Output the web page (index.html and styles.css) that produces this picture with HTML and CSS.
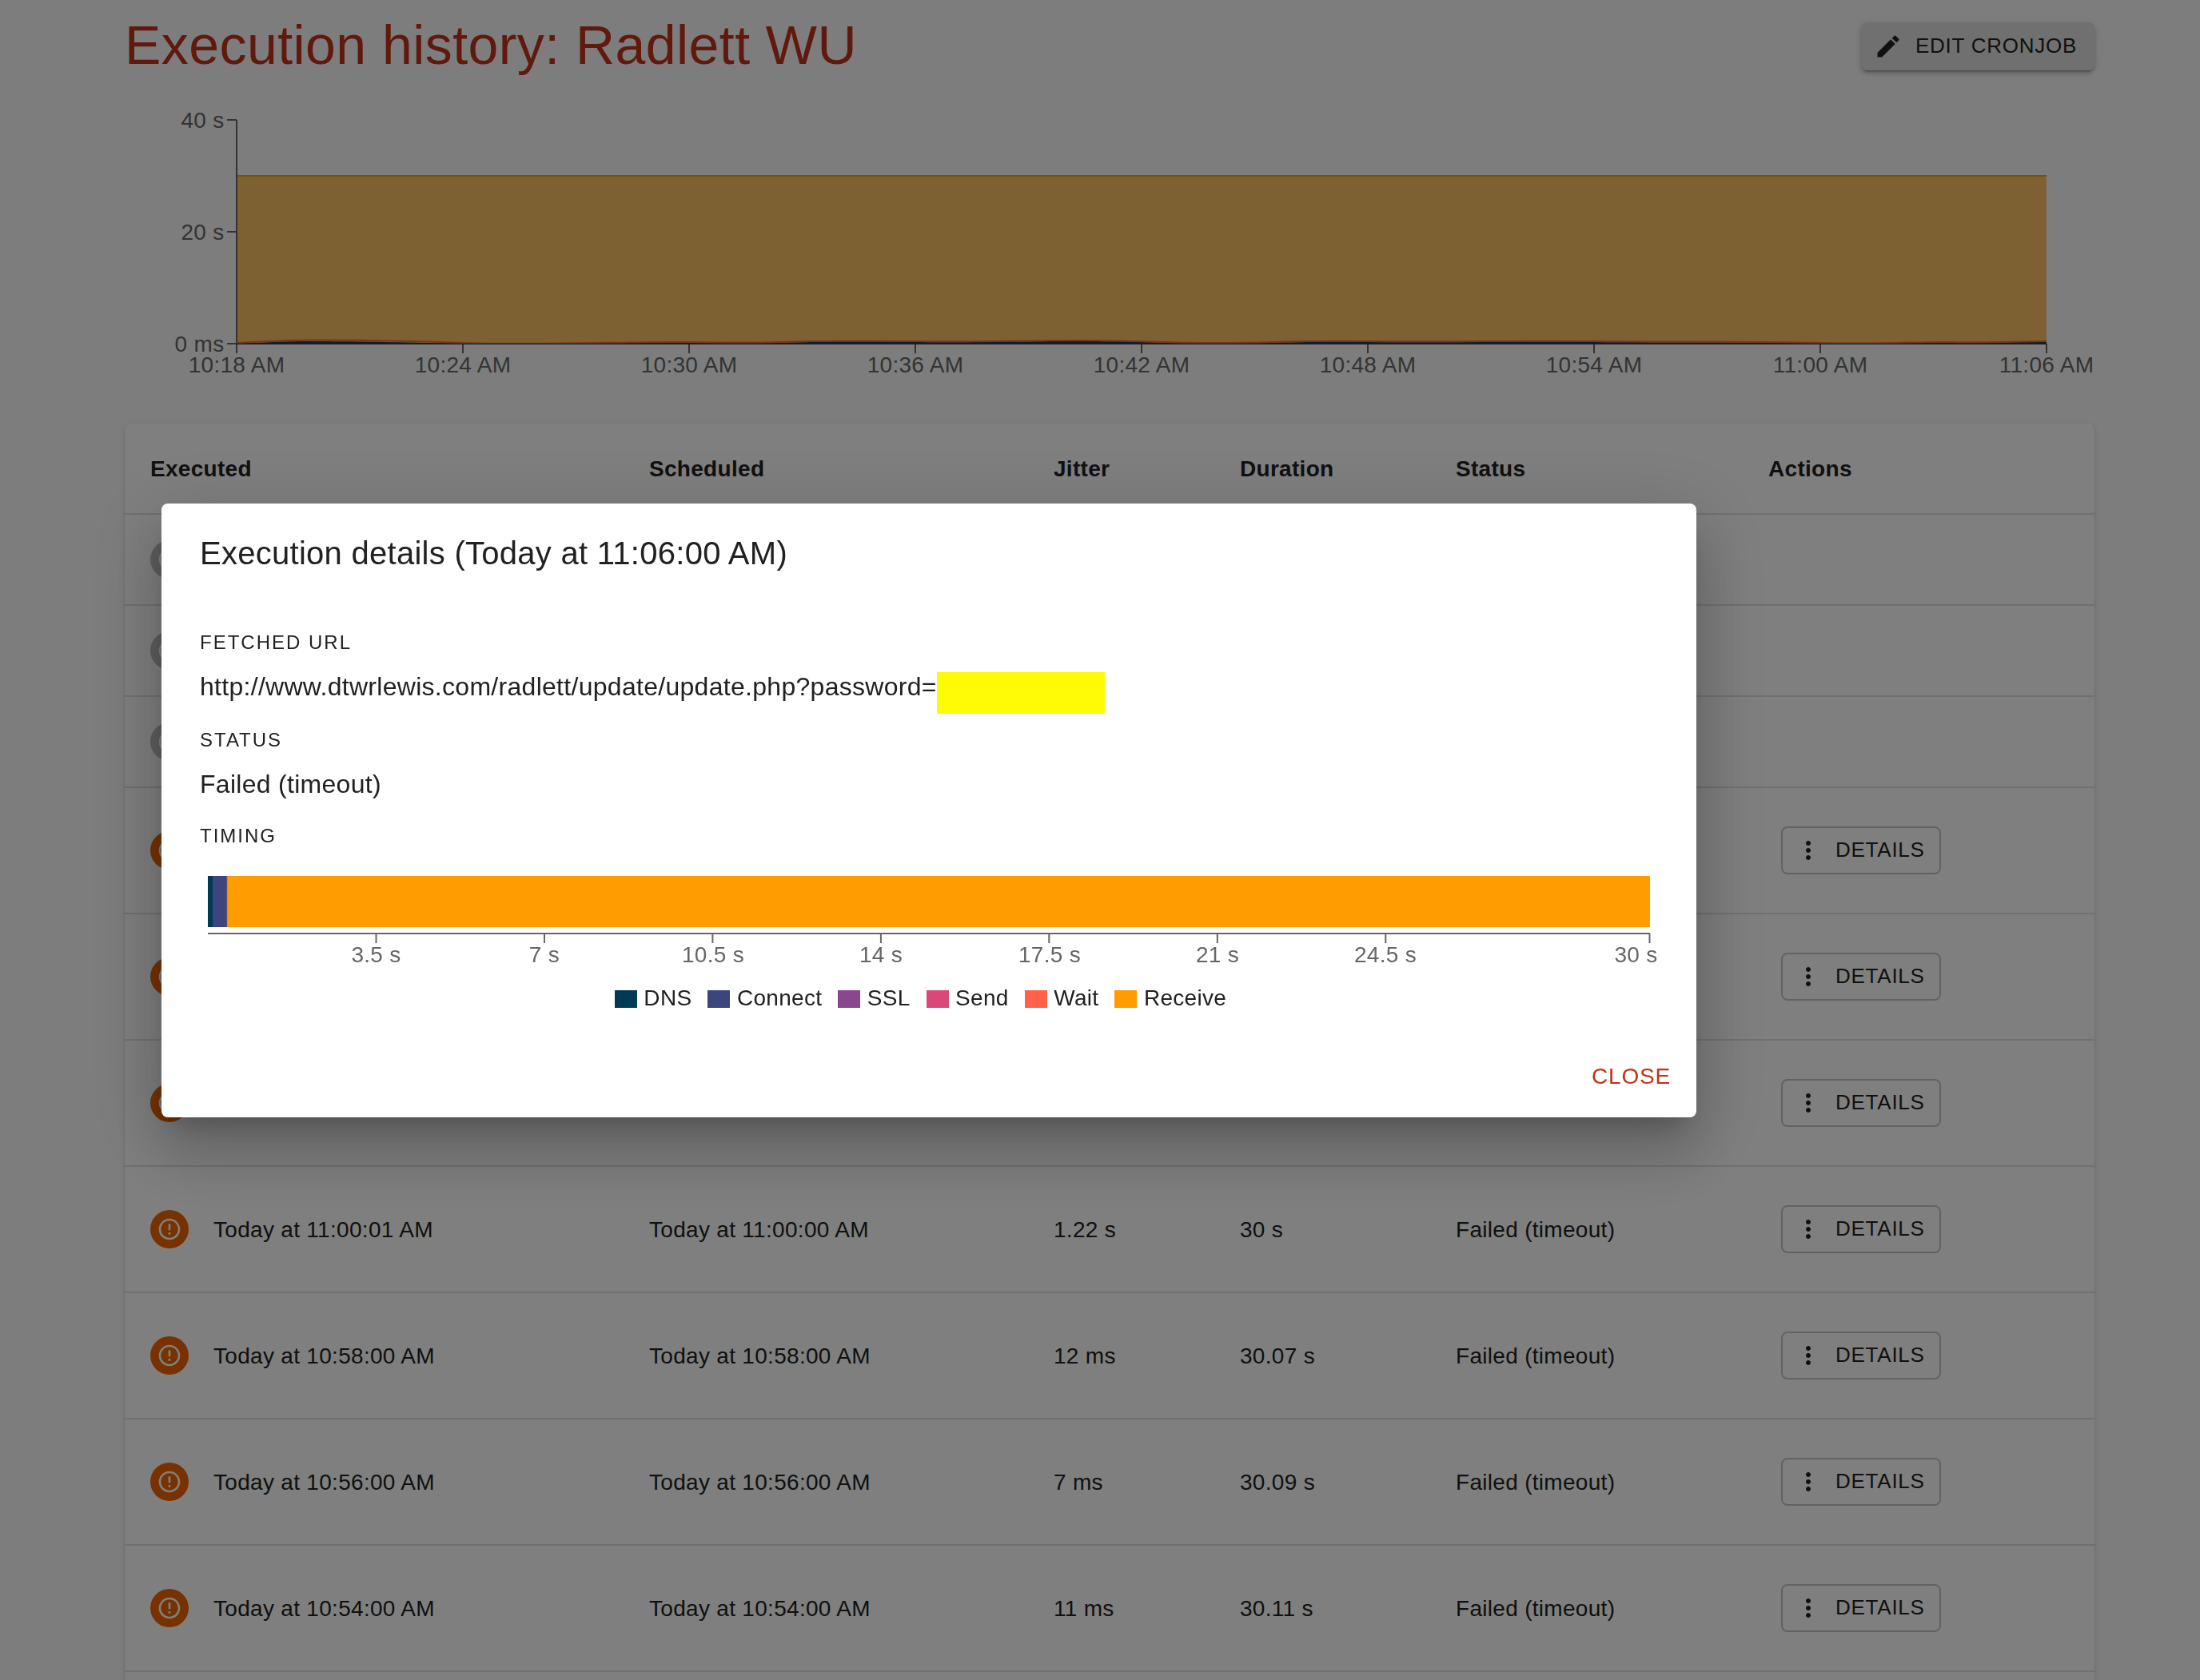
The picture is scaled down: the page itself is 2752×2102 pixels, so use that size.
FILE: index.html
```html
<!DOCTYPE html>
<html lang="en">
<head>
<meta charset="utf-8">
<title>Execution history</title>
<link rel="stylesheet" href="styles.css">
</head>
<body>
<svg class="defs" width="0" height="0" aria-hidden="true">
  <symbol id="edit" viewBox="0 0 24 24"><path d="M3 17.25V21h3.75L17.81 9.94l-3.75-3.75L3 17.25zM20.71 7.04c.39-.39.39-1.02 0-1.41l-2.34-2.34c-.39-.39-1.02-.39-1.41 0l-1.83 1.83 3.75 3.75 1.83-1.83z"/></symbol>
  <symbol id="more" viewBox="0 0 24 24"><path d="M12 8c1.1 0 2-.9 2-2s-.9-2-2-2-2 .9-2 2 .9 2 2 2zm0 2c-1.1 0-2 .9-2 2s.9 2 2 2 2-.9 2-2-.9-2-2-2zm0 6c-1.1 0-2 .9-2 2s.9 2 2 2 2-.9 2-2-.9-2-2-2z"/></symbol>
  <symbol id="error" viewBox="0 0 24 24"><path d="M11 15h2v2h-2zm0-8h2v6h-2zm.99-5C6.47 2 2 6.48 2 12s4.47 10 9.99 10C17.52 22 22 17.52 22 12S17.52 2 11.99 2zM12 20c-4.42 0-8-3.58-8-8s3.58-8 8-8 8 3.58 8 8-3.58 8-8 8z"/></symbol>
</svg>

<main class="page">
  <header class="page-head">
    <h1 class="page-title">Execution history: Radlett WU</h1>
    <button class="btn btn-contained"><svg class="btn-icon"><use href="#edit"/></svg><span class="btn-label">Edit cronjob</span></button>
  </header>

  <svg class="history-chart" width="2465" height="360" viewBox="156 120 2465 360">
    <rect x="296" y="220" width="2264" height="210" fill="#ff9c00" fill-opacity=".6"/>
    <path d="M296 220H2560" stroke="#ff9c00" stroke-width="2"/>
    <path class="axis" d="M296 150V430M284 150H296M284 290H296M284 430H2560M296 430V442M579 430V442M862 430V442M1145 430V442M1428 430V442M1711 430V442M1994 430V442M2277 430V442M2560 430V442"/>
    <path d="M296 431V430C340 428 360 427 390 427S500 428 579 430S800 428 862 429S940 430 975 429S1040 427 1145 428S1260 427 1350 427S1450 430 1520 430S1620 427 1711 428S1900 427 1994 428S2200 428 2277 430S2400 428 2440 429S2520 428 2560 428V431Z" fill="#1c3a5c"/>
    <path d="M296 429C340 427 360 425.500 390 425.500S500 426 579 429S800 427 862 428S940 429 975 428S1040 426 1145 427S1260 426 1350 426S1450 429 1520 429S1620 426 1711 427S1900 426 1994 427S2200 427 2277 429S2400 427 2440 428S2520 427 2560 427" fill="none" stroke="#ec5a34" stroke-opacity=".85" stroke-width="2"/>
    <path d="M298 430.500H2560" stroke="#2a3e58" stroke-width="1"/>
    <g class="axis-label end">
      <text x="280.5" y="160">40 s</text><text x="280.5" y="300">20 s</text><text x="280.5" y="440">0 ms</text>
    </g>
    <g class="axis-label">
      <text x="296" y="466">10:18 AM</text><text x="579" y="466">10:24 AM</text><text x="862" y="466">10:30 AM</text><text x="1145" y="466">10:36 AM</text><text x="1428" y="466">10:42 AM</text><text x="1711" y="466">10:48 AM</text><text x="1994" y="466">10:54 AM</text><text x="2277" y="466">11:00 AM</text><text x="2560" y="466">11:06 AM</text>
    </g>
  </svg>

  <section class="table">
    <div class="row row-head"><span>Executed</span><span>Scheduled</span><span>Jitter</span><span>Duration</span><span>Status</span><span>Actions</span></div>
    <div class="row row-planned"><span class="when"><i class="avatar"><svg><use href="#error"/></svg></i></span></div>
    <div class="row row-planned"><span class="when"><i class="avatar"><svg><use href="#error"/></svg></i></span></div>
    <div class="row row-planned"><span class="when"><i class="avatar"><svg><use href="#error"/></svg></i></span></div>
    <div class="row"><span class="when"><i class="avatar failed"><svg><use href="#error"/></svg></i></span><span></span><span></span><span></span><span></span><span class="actions"><button class="btn btn-outlined"><svg class="btn-icon"><use href="#more"/></svg><span class="btn-label">Details</span></button></span></div>
    <div class="row"><span class="when"><i class="avatar failed"><svg><use href="#error"/></svg></i></span><span></span><span></span><span></span><span></span><span class="actions"><button class="btn btn-outlined"><svg class="btn-icon"><use href="#more"/></svg><span class="btn-label">Details</span></button></span></div>
    <div class="row"><span class="when"><i class="avatar failed"><svg><use href="#error"/></svg></i></span><span></span><span></span><span></span><span></span><span class="actions"><button class="btn btn-outlined"><svg class="btn-icon"><use href="#more"/></svg><span class="btn-label">Details</span></button></span></div>
    <div class="row"><span class="when"><i class="avatar failed"><svg><use href="#error"/></svg></i><b class="cell">Today at 11:00:01 AM</b></span><span class="cell">Today at 11:00:00 AM</span><span class="cell">1.22 s</span><span class="cell">30 s</span><span class="cell">Failed (timeout)</span><span class="actions"><button class="btn btn-outlined"><svg class="btn-icon"><use href="#more"/></svg><span class="btn-label">Details</span></button></span></div>
    <div class="row"><span class="when"><i class="avatar failed"><svg><use href="#error"/></svg></i><b class="cell">Today at 10:58:00 AM</b></span><span class="cell">Today at 10:58:00 AM</span><span class="cell">12 ms</span><span class="cell">30.07 s</span><span class="cell">Failed (timeout)</span><span class="actions"><button class="btn btn-outlined"><svg class="btn-icon"><use href="#more"/></svg><span class="btn-label">Details</span></button></span></div>
    <div class="row"><span class="when"><i class="avatar failed"><svg><use href="#error"/></svg></i><b class="cell">Today at 10:56:00 AM</b></span><span class="cell">Today at 10:56:00 AM</span><span class="cell">7 ms</span><span class="cell">30.09 s</span><span class="cell">Failed (timeout)</span><span class="actions"><button class="btn btn-outlined"><svg class="btn-icon"><use href="#more"/></svg><span class="btn-label">Details</span></button></span></div>
    <div class="row"><span class="when"><i class="avatar failed"><svg><use href="#error"/></svg></i><b class="cell">Today at 10:54:00 AM</b></span><span class="cell">Today at 10:54:00 AM</span><span class="cell">11 ms</span><span class="cell">30.11 s</span><span class="cell">Failed (timeout)</span><span class="actions"><button class="btn btn-outlined"><svg class="btn-icon"><use href="#more"/></svg><span class="btn-label">Details</span></button></span></div>
  </section>
</main>

<div class="backdrop">
  <section class="dialog" role="dialog">
    <h2 class="dialog-title">Execution details (Today at 11:06:00 AM)</h2>
    <div class="field"><span class="overline">Fetched URL</span><p class="value">http://www.dtwrlewis.com/radlett/update/update.php?password=<span class="redacted"></span></p></div>
    <div class="field field-status"><span class="overline">Status</span><p class="value">Failed (timeout)</p></div>
    <div class="field field-timing"><span class="overline">Timing</span></div>
    <svg class="timing-chart" width="1824" height="124" viewBox="250 1090 1824 124">
      <rect x="260" y="1096" width="6" height="64" fill="#003a54"/>
      <rect x="266" y="1096" width="18" height="64" fill="#3c457c"/>
      <rect x="284" y="1096" width="1780" height="64" fill="#ff9c00"/>
      <path d="M284 1096V1160" stroke="#a0607a" stroke-width=".8"/>
      <path class="axis" d="M260 1168H2064M470.5 1168V1180M681 1168V1180M891.4 1168V1180M1101.9 1168V1180M1312.3 1168V1180M1522.8 1168V1180M1733.3 1168V1180M2063.5 1168V1180"/>
      <g class="axis-label">
        <text x="470.5" y="1204">3.5 s</text><text x="681" y="1204">7 s</text><text x="892" y="1204">10.5 s</text><text x="1102" y="1204">14 s</text><text x="1313" y="1204">17.5 s</text><text x="1523" y="1204">21 s</text><text x="1733" y="1204">24.5 s</text><text x="2046.500" y="1204">30 s</text>
      </g>
    </svg>
    <ul class="legend">
      <li><i class="swatch dns"></i>DNS</li><li><i class="swatch connect"></i>Connect</li><li><i class="swatch ssl"></i>SSL</li><li><i class="swatch send"></i>Send</li><li><i class="swatch wait"></i>Wait</li><li><i class="swatch receive"></i>Receive</li>
    </ul>
    <footer class="dialog-actions"><button class="btn-text">Close</button></footer>
  </section>
</div>
</body>
</html>
```
FILE: styles.css
```css
* { box-sizing: border-box; }
html, body { margin: 0; height: 2102px; overflow: hidden; }
body {
  background: #fafafa;
  color: #212121;
  font-family: "Liberation Sans", Arial, sans-serif;
  font-size: 28px;
  letter-spacing: .01071em;
}
.defs { display: block; height: 0; }
button { font: inherit; color: inherit; border: 0; background: none; }

.page { width: 2464px; height: 2102px; margin-left: 156px; display: flex; flex-direction: column; }
.page-head { flex: none; height: 120px; padding-top: 14px; display: flex; justify-content: space-between; align-items: flex-start; }
.page-title { margin: 0; font-size: 68px; font-weight: 400; line-height: 84px; letter-spacing: .0065em; color: #c03318; white-space: nowrap; }
.history-chart { display: block; flex: none; margin-bottom: 50px; overflow: visible; }
.axis { stroke: #666; stroke-width: 2; fill: none; }
.axis-label { fill: #666; text-anchor: middle; font-size: 28px; letter-spacing: .3px; }
.axis-label.end { text-anchor: end; }

.btn { display: inline-flex; align-items: center; height: 60px; padding: 0 20px; border-radius: 8px; font-size: 26px; line-height: 44px; letter-spacing: .02857em; text-transform: uppercase; white-space: nowrap; }
.btn-icon { width: 36px; height: 36px; margin: 0 16px 0 -4px; fill: currentColor; }
.btn-label { padding-bottom: 2px; }
.btn-contained { margin-top: 14px; width: 292px; background: #e0e0e0; box-shadow: 0 6px 2px -4px rgba(0,0,0,.2), 0 4px 4px rgba(0,0,0,.14), 0 2px 10px rgba(0,0,0,.12); }
.btn-outlined { width: 200px; padding: 0 18px; border: 2px solid rgba(0,0,0,.23); }

.table { flex: 1; background: #fff; border-radius: 8px 8px 0 0; box-shadow: 0 4px 2px -2px rgba(0,0,0,.2), 0 2px 2px rgba(0,0,0,.14), 0 2px 6px rgba(0,0,0,.12); }
.row { display: grid; grid-template-columns: 624px 506px 233px 270px 391px 1fr; align-items: center; height: 158px; padding-left: 32px; border-bottom: 2px solid #e0e0e0; }
.row-head { height: 114px; padding-top: 2px; font-weight: 700; }
.row-planned { height: 114px; }
.cell { padding-top: 2px; font-weight: 400; }
.when { display: flex; align-items: center; }
.avatar { display: flex; align-items: center; justify-content: center; width: 48px; height: 48px; margin-right: 31px; border-radius: 50%; background: #bdbdbd; }
.avatar svg { width: 32px; height: 32px; fill: #fff; }
.avatar.failed { background: #ef6400; }
.actions { display: flex; padding-left: 16px; }

.backdrop { position: fixed; inset: 0; padding: 630px 0 0 202px; background: rgba(0,0,0,.5); }
.dialog { width: 1920px; height: 768px; display: flex; flex-direction: column; background: #fff; border-radius: 8px; box-shadow: 0 22px 30px -14px rgba(0,0,0,.2), 0 48px 76px 6px rgba(0,0,0,.14), 0 18px 92px 16px rgba(0,0,0,.12); }
.dialog-title { margin: 0; padding: 30px 48px 0; height: 142px; font-size: 40px; font-weight: 400; line-height: 64px; letter-spacing: .0068em; }
.field { height: 122px; padding: 0 48px; }
.field-status { height: 120px; }
.field-timing { height: 54px; }
.overline { display: block; height: 64px; font-size: 24px; line-height: 64px; letter-spacing: .08333em; text-transform: uppercase; }
.value { display: flex; margin: 0; font-size: 32px; line-height: 46px; letter-spacing: .009em; white-space: nowrap; }
.redacted { width: 210px; height: 52px; margin-top: 5px; background: #fffa05; }
.timing-chart { display: block; flex: none; margin: 22px 0 0 48px; }
.legend { display: flex; justify-content: center; gap: 20px; margin: 16px 0 0; padding: 0 21px 0 0; height: 40px; list-style: none; line-height: 38px; }
.legend li { display: flex; }
.swatch { width: 28px; height: 22px; margin: 9px 8.500px 0 0; }
.dns { background: #003a54; }
.connect { background: #3c457c; }
.ssl { background: #8a468e; }
.send { background: #d94878; }
.wait { background: #ff6248; }
.receive { background: #ff9c00; }
.dialog-actions { display: flex; justify-content: flex-end; margin-top: 53px; padding-right: 32px; }
.btn-text { padding: 0; line-height: 48px; letter-spacing: .02857em; text-transform: uppercase; color: #bf3318; }
```
